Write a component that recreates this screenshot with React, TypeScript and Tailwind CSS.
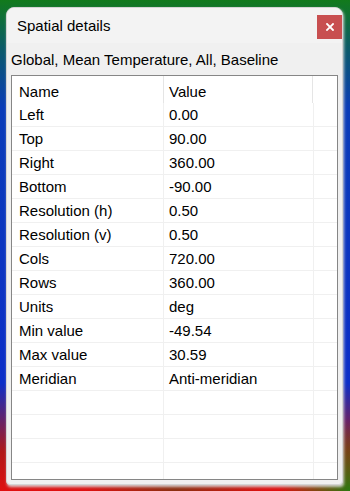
const rows: [string, string][] = [
  ["Left", "0.00"],
  ["Top", "90.00"],
  ["Right", "360.00"],
  ["Bottom", "-90.00"],
  ["Resolution (h)", "0.50"],
  ["Resolution (v)", "0.50"],
  ["Cols", "720.00"],
  ["Rows", "360.00"],
  ["Units", "deg"],
  ["Min value", "-49.54"],
  ["Max value", "30.59"],
  ["Meridian", "Anti-meridian"],
];

// a few blank lines fill the rest of the list, clipped by the frame
const filler: [string, string][] = [
  ["", ""],
  ["", ""],
  ["", ""],
  ["", ""],
  ["", ""],
];

export default function App() {
  return (
    <div
      className="w-[350px] h-[491px] pt-[7px] pl-[6px] pr-[7px] pb-[6px] flex bg-[radial-gradient(circle_at_100%_100%,#2a7a10_0,transparent_70px),radial-gradient(circle_at_50%_100%,#8a3010_0,transparent_90px),linear-gradient(to_bottom,#127a1c_0%,#0b5a6a_10%,#0a3cb8_22%,#0c2ec8_78%,#b01818_92%,#e01010_100%)]"
      style={{ fontFamily: '"Liberation Sans", Arial, sans-serif' }}
    >
      <div className="flex-1 flex flex-col rounded-t-[8px] rounded-b-[4px] bg-[#f0f0f0] border border-[#d4d4d4] shadow-[1px_2px_3px_rgba(220,220,220,0.9)] overflow-hidden">
        {/* Title bar */}
        <div className="h-[35px] flex items-start justify-between bg-[#f3f3f3] shrink-0">
          <div className="pl-[10px] pt-[8px] text-[15px] leading-[20px] text-black">
            Spatial details
          </div>
          <button className="mt-[7px] mr-0 w-[25px] h-[24px] bg-[#c84f50] flex items-center justify-center">
            <svg width="8" height="8" viewBox="0 0 8 8">
              <path d="M1 1 L7 7 M7 1 L1 7" stroke="white" strokeWidth="1.8" strokeLinecap="square" />
            </svg>
          </button>
        </div>

        {/* Layer label */}
        <div className="pl-[4px] pt-[7px] pb-[5px] text-[15px] leading-[20px] text-black shrink-0">
          Global, Mean Temperature, All, Baseline
        </div>

        {/* List */}
        <div className="flex-1 mx-[4px] mb-[4px] border border-[#868686] bg-white flex flex-col overflow-hidden">
          <div className="h-[27px] flex shrink-0 text-[15px] text-black">
            <div className="w-[152px] pl-[7px] pt-[5px] border-r border-[#e5e5e5]">Name</div>
            <div className="w-[149px] pl-[5px] pt-[5px] border-r border-[#e5e5e5]">Value</div>
            <div className="flex-1" />
          </div>
          <div className="flex-1 overflow-hidden">
            {[...rows, ...filler].map(([name, value], i) => (
              <div
                key={i}
                className="h-[24px] flex border-b border-[#f0f0f0] text-[15px] leading-[23px] text-black"
              >
                <div className="w-[152px] pl-[7px] border-r border-[#f0f0f0] whitespace-nowrap">{name}</div>
                <div className="w-[150px] pl-[5px] border-r border-[#f0f0f0] whitespace-nowrap">{value}</div>
                <div className="flex-1" />
              </div>
            ))}
          </div>
        </div>
      </div>
    </div>
  );
}
